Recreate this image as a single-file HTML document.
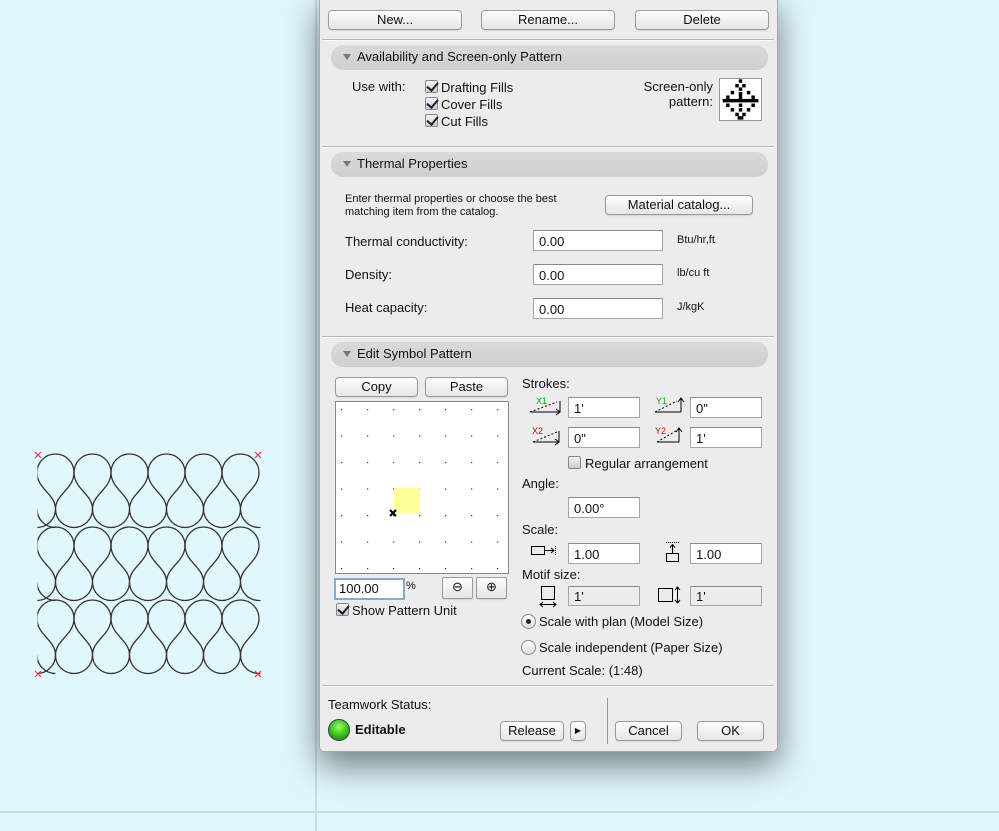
<!DOCTYPE html>
<html><head><meta charset="utf-8"><style>
*{box-sizing:border-box;margin:0;padding:0}
body{width:999px;height:831px;background:#e0f8fd;position:relative;overflow:hidden;font-family:"Liberation Sans",sans-serif;font-size:13px;color:#111}
.a{position:absolute}
.dlg{position:absolute;left:319px;top:-6px;width:459px;height:758px;background:#ececec;border:1px solid #a9a9a9;border-radius:0 0 5px 5px;box-shadow:0 14px 34px rgba(0,0,0,.5)}
.btn{position:absolute;height:20px;border:1px solid #9a9a9a;border-radius:4px;background:linear-gradient(#fff,#f0f0f0 50%,#e6e6e6);text-align:center;line-height:18px;font-size:13px;box-shadow:0 1px 1px rgba(0,0,0,.1)}
.sep{position:absolute;left:322px;width:452px;height:2px;border-top:1px solid #b5b5b5;border-bottom:1px solid #fafafa}
.hdr{position:absolute;left:331px;width:437px;height:25px;border-radius:12px;background:linear-gradient(#dadada,#cfcfcf);line-height:24px;padding-left:26px;font-size:13px}
.hdr:before{content:"";position:absolute;left:12px;top:9px;border-left:4px solid transparent;border-right:4px solid transparent;border-top:6px solid #777}
.inp{position:absolute;height:21px;background:#fff;border:1px solid #a5a5a5;border-top-color:#8a8a8a;padding-left:5px;line-height:21px;font-size:13px}
.dis{background:#ececec}
.cb{position:absolute;width:13px;height:13px;border:1px solid #888;border-radius:2px;background:linear-gradient(#f4f4f8,#c9ccd6)}
.cb.on:after{content:"";position:absolute;left:3px;top:-1px;width:5px;height:9px;border:solid #222;border-width:0 2.5px 2.5px 0;transform:rotate(40deg)}
.sm{font-size:11px}
</style></head><body>
<div class="a" style="left:0;top:811px;width:999px;height:2px;background:#c9dde0"></div>
<div class="a" style="left:315px;top:0;width:2px;height:831px;background:#c9dde0"></div>

<svg class="a" style="left:0;top:0" width="300" height="700" viewBox="0 0 300 700">
<defs>
<clipPath id="c"><rect x="37.5" y="440" width="223" height="250"/></clipPath>
<g id="t" fill="none" stroke="#333" stroke-width="1.3">
<path d="M0,18.5 A18.5,18.5 0 0 1 37,18.5 M0,18.5 C0,35 18.5,40 18.5,55 M37,18.5 C37,35 18.5,40 18.5,55 M18.5,55 A18.5,18.5 0 0 0 55.5,55"/>
</g>
<g id="row"><use href="#t" x="1"/><use href="#t" x="38"/><use href="#t" x="75"/><use href="#t" x="112"/><use href="#t" x="149"/><use href="#t" x="186"/><use href="#t" x="223"/><path d="M1,55 A18.5,18.5 0 0 0 19.5,73.5" fill="none" stroke="#333" stroke-width="1.3" transform="translate(37,0)"/></g>
</defs>
<g clip-path="url(#c)">
<use href="#row" x="0" y="454" transform="translate(-1,0)"/>
<use href="#row" x="0" y="527" transform="translate(-1,0)"/>
<use href="#row" x="0" y="600" transform="translate(-1,0)"/>
</g>
<g stroke="#e33" stroke-width="1.2">
<path d="M35,452 l6,6 M41,452 l-6,6 M255,452 l6,6 M261,452 l-6,6 M35,671 l6,6 M41,671 l-6,6 M255,671 l6,6 M261,671 l-6,6"/>
</g>
</svg>

<div class="dlg"></div>
<div class="btn" style="left:328px;top:10px;width:134px">New...</div>
<div class="btn" style="left:481px;top:10px;width:134px">Rename...</div>
<div class="btn" style="left:635px;top:10px;width:134px">Delete</div>
<div class="sep" style="top:39px"></div>
<div class="hdr" style="top:45px">Availability and Screen-only Pattern</div>
<div class="a" style="left:352px;top:79px">Use with:</div>
<div class="cb on" style="left:425px;top:80px"></div><div class="a" style="left:441px;top:80px">Drafting Fills</div>
<div class="cb on" style="left:425px;top:97px"></div><div class="a" style="left:441px;top:97px">Cover Fills</div>
<div class="cb on" style="left:425px;top:114px"></div><div class="a" style="left:441px;top:114px">Cut Fills</div>
<div class="a" style="left:620px;top:79px;width:93px;text-align:right;line-height:15px">Screen-only<br>pattern:</div>
<div class="a" style="left:719px;top:78px;width:43px;height:43px;background:#fff;border:1px solid #999"></div>
<svg class="a" style="left:719px;top:78px" width="43" height="43"><g fill="#000" transform="translate(21.5,21.5) scale(1.15) translate(-20.5,-21.5)">
<rect x="19" y="4" width="3" height="3"/><rect x="16" y="8" width="3" height="3"/><rect x="22" y="8" width="3" height="3"/><rect x="19" y="11" width="3" height="3"/>
<rect x="12" y="14" width="3" height="3"/><rect x="26" y="14" width="3" height="3"/><rect x="19" y="15" width="3" height="3"/>
<rect x="8" y="18" width="3" height="3"/><rect x="30" y="18" width="3" height="3"/><rect x="19" y="18" width="3" height="3"/>
<rect x="5" y="21" width="31" height="3"/>
<rect x="8" y="25" width="3" height="3"/><rect x="30" y="25" width="3" height="3"/><rect x="19" y="25" width="3" height="3"/>
<rect x="12" y="29" width="3" height="3"/><rect x="26" y="29" width="3" height="3"/><rect x="19" y="29" width="3" height="3"/>
<rect x="16" y="33" width="3" height="3"/><rect x="22" y="33" width="3" height="3"/><rect x="18" y="36" width="5" height="3"/>
</g></svg>
<div class="sep" style="top:146px"></div>
<div class="hdr" style="top:152px">Thermal Properties</div>
<div class="a sm" style="left:345px;top:193px;line-height:13px">Enter thermal properties or choose the best<br>matching item from the catalog.</div>
<div class="btn" style="left:605px;top:195px;width:148px">Material catalog...</div>
<div class="a" style="left:345px;top:234px">Thermal conductivity:</div>
<div class="inp" style="left:533px;top:230px;width:130px">0.00</div><div class="a sm" style="left:677px;top:234px">Btu/hr,ft</div>
<div class="a" style="left:345px;top:267px">Density:</div>
<div class="inp" style="left:533px;top:264px;width:130px">0.00</div><div class="a sm" style="left:677px;top:267px">lb/cu ft</div>
<div class="a" style="left:345px;top:300px">Heat capacity:</div>
<div class="inp" style="left:533px;top:298px;width:130px">0.00</div><div class="a sm" style="left:677px;top:301px">J/kgK</div>
<div class="sep" style="top:336px"></div>
<div class="hdr" style="top:342px">Edit Symbol Pattern</div>

<div class="btn" style="left:335px;top:377px;width:83px">Copy</div>
<div class="btn" style="left:425px;top:377px;width:83px">Paste</div>
<div class="a" style="left:335px;top:401px;width:174px;height:173px;background:#fff;border:1px solid #888"></div>
<svg class="a" style="left:336px;top:402px" width="172" height="171">
<defs><pattern id="d" x="5" y="7" width="26" height="26.5" patternUnits="userSpaceOnUse"><rect width="1.2" height="1.2" fill="#333"/></pattern></defs>
<rect width="172" height="171" fill="url(#d)"/>
<rect x="58" y="86" width="26" height="26" fill="#ffff99"/>
<path d="M54,108 l6,6 M60,108 l-6,6" stroke="#000" stroke-width="2"/>
</svg>
<div class="inp" style="left:334px;top:578px;width:71px;height:22px;border:2px solid #8fa6c4;padding-left:3px;line-height:18px">100.00</div>
<div class="a sm" style="left:406px;top:580px">%</div>
<div class="btn" style="left:442px;top:577px;width:31px;height:22px;border-radius:2px">⊖</div>
<div class="btn" style="left:476px;top:577px;width:31px;height:22px;border-radius:2px">⊕</div>
<div class="cb on" style="left:336px;top:603px"></div><div class="a" style="left:352px;top:603px">Show Pattern Unit</div>

<div class="a" style="left:522px;top:376px">Strokes:</div>
<svg class="a" style="left:527px;top:395px" width="240" height="55" fill="none" stroke-width="1">
<g stroke="#000"><path d="M3,17 L33,17 M29,14 L33,17 29,20 M33,6 L33,17"/><path d="M3,17 L30,7" stroke-dasharray="2 2"/>
<path d="M128,17 L154,17 M154,17 L154,4 M151,7 L154,3 157,7"/><path d="M128,17 L150,6" stroke-dasharray="2 2"/>
<path d="M6,47 L32,47 M28,44 L32,47 28,50 M32,36 L32,47"/><path d="M6,47 L30,37" stroke-dasharray="2 2"/>
<path d="M130,47 L152,47 M152,47 L152,33 M149,37 L152,33 155,37"/><path d="M130,47 L149,36" stroke-dasharray="2 2"/></g>
<text x="9" y="9" font-size="9" fill="#1a9a1a" stroke="none" font-family="Liberation Sans">X1</text>
<text x="129" y="9" font-size="9" fill="#1a9a1a" stroke="none" font-family="Liberation Sans">Y1</text>
<text x="5" y="39" font-size="9" fill="#a01818" stroke="none" font-family="Liberation Sans">X2</text>
<text x="128" y="39" font-size="9" fill="#a01818" stroke="none" font-family="Liberation Sans">Y2</text>
</svg>
<div class="inp" style="left:568px;top:397px;width:72px">1'</div>
<div class="inp" style="left:690px;top:397px;width:72px">0"</div>
<div class="inp" style="left:568px;top:427px;width:72px">0"</div>
<div class="inp" style="left:690px;top:427px;width:72px">1'</div>
<div class="cb" style="left:568px;top:456px"></div><div class="a" style="left:585px;top:456px">Regular arrangement</div>
<div class="a" style="left:522px;top:476px">Angle:</div>
<div class="inp" style="left:568px;top:497px;width:72px">0.00°</div>
<div class="a" style="left:522px;top:522px">Scale:</div>
<svg class="a" style="left:530px;top:541px" width="160" height="26" fill="none" stroke="#000">
<rect x="1.5" y="5.5" width="13" height="8"/><path d="M15,9.5 L24,9.5 M21,7 L24,9.5 21,12" /><path d="M25.5,5 L25.5,14" stroke-dasharray="1 1"/>
<rect x="136.5" y="12.5" width="12" height="8"/><path d="M142.5,12 L142.5,4 M140,6.5 L142.5,3.5 145,6.5"/><path d="M136,1.5 L149,1.5" stroke-dasharray="1 1"/>
</svg>
<div class="inp" style="left:568px;top:543px;width:72px">1.00</div>
<div class="inp" style="left:690px;top:543px;width:72px">1.00</div>
<div class="a" style="left:522px;top:567px">Motif size:</div>
<svg class="a" style="left:538px;top:585px" width="150" height="24" fill="none" stroke="#000">
<rect x="3.5" y="1.5" width="13" height="13"/><path d="M2,19.5 L18,19.5 M5,17 L2,19.5 5,22 M15,17 L18,19.5 15,22"/>
<rect x="120.5" y="3.5" width="14" height="13"/><path d="M139.5,2 L139.5,18 M137,5 L139.5,2 142,5 M137,15 L139.5,18 142,15"/>
</svg>
<div class="inp dis" style="left:568px;top:586px;width:72px;height:20px;line-height:19px">1'</div>
<div class="inp dis" style="left:690px;top:586px;width:72px;height:20px;line-height:19px">1'</div>
<div class="a" style="left:521px;top:614px;width:15px;height:15px;border-radius:50%;border:1px solid #888;background:linear-gradient(#fff,#ddd)"><div class="a" style="left:4px;top:4px;width:5px;height:5px;border-radius:50%;background:#222"></div></div>
<div class="a" style="left:539px;top:614px">Scale with plan (Model Size)</div>
<div class="a" style="left:521px;top:640px;width:15px;height:15px;border-radius:50%;border:1px solid #888;background:linear-gradient(#fff,#ddd)"></div>
<div class="a" style="left:539px;top:640px">Scale independent (Paper Size)</div>
<div class="a" style="left:522px;top:663px">Current Scale: (1:48)</div>

<div class="sep" style="top:685px"></div>
<div class="a" style="left:328px;top:697px">Teamwork Status:</div>
<div class="a" style="left:328px;top:719px;width:22px;height:22px;border-radius:50%;background:radial-gradient(circle at 50% 35%,#9f6 0,#4c2 45%,#1a6a08 100%);border:1px solid #244"></div>
<div class="a" style="left:355px;top:722px;font-weight:bold">Editable</div>
<div class="btn" style="left:500px;top:721px;width:64px">Release</div>
<div class="btn" style="left:570px;top:721px;width:16px;font-size:8px">▶</div>
<div class="a" style="left:607px;top:698px;width:1px;height:46px;background:#999"></div>
<div class="btn" style="left:615px;top:721px;width:67px">Cancel</div>
<div class="btn" style="left:697px;top:721px;width:67px">OK</div>
</body></html>
